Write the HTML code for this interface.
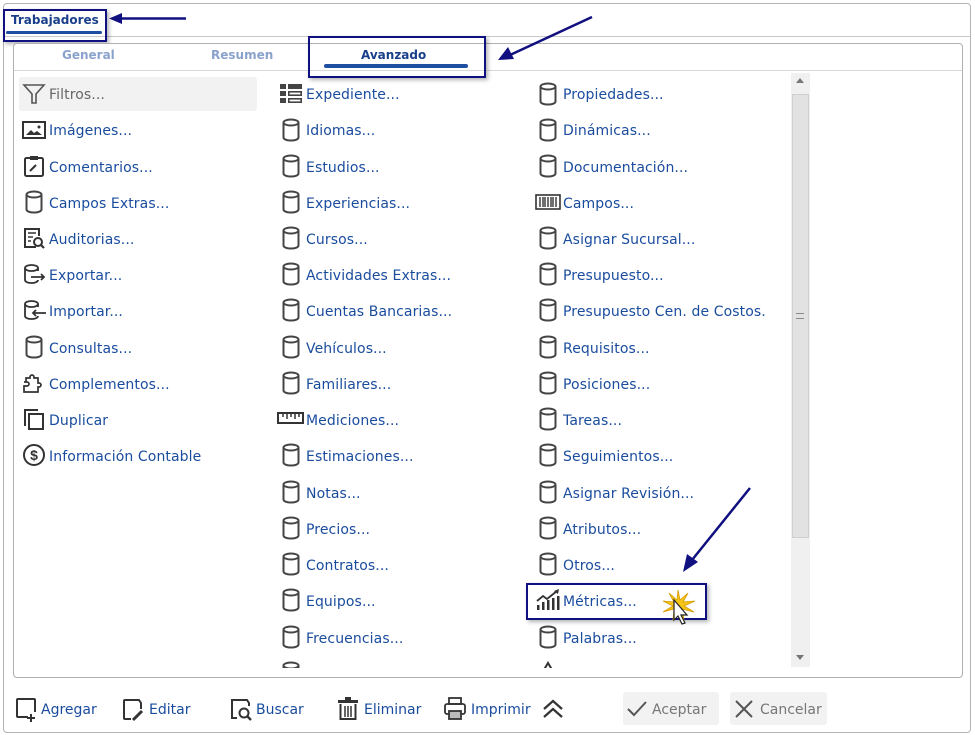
<!DOCTYPE html>
<html><head><meta charset="utf-8"><style>
*{margin:0;padding:0;box-sizing:border-box}
body{width:975px;height:735px;background:#fff;font-family:"DejaVu Sans","Liberation Sans",sans-serif;position:relative;overflow:hidden}
.abs{position:absolute}
.frame{left:3px;top:3px;width:968px;height:730px;border:1px solid #b4b4b4;border-radius:4px;background:#fff}
.panel{left:13px;top:43px;width:950px;height:635px;border:1px solid #b0b0b0;border-radius:4px;background:#fff}
.it{position:absolute;font-size:14px;color:#1a4c9e;white-space:nowrap;line-height:18px;margin-top:1px;letter-spacing:0.1px}
.ic{position:absolute;width:24px;height:24px}
.tab{position:absolute;font-size:12px;font-weight:bold;top:48px}
.tb{position:absolute;top:701px;font-size:14px;color:#1a4c9e;line-height:18px}
svg{overflow:visible}
</style></head><body>
<svg width="0" height="0" style="position:absolute"><defs>
<symbol id="cyl" viewBox="0 0 24 24"><g fill="none" stroke="#444" stroke-width="2"><ellipse cx="12" cy="4.5" rx="7.5" ry="3"/><path d="M4.5 4.5v15c0 1.7 3.4 3 7.5 3s7.5-1.3 7.5-3v-15"/></g></symbol>
</defs></svg>
<div class="abs frame"></div>
<div class="abs" style="left:4px;top:36px;width:966px;height:1px;background:#c8c8c8"></div>
<div class="abs" style="left:11px;top:13px;font-size:12px;font-weight:bold;color:#1a3f8a">Trabajadores</div>
<div class="abs" style="left:6px;top:31px;width:96px;height:3px;background:#1f4fa0;border-radius:2px"></div>
<div class="abs" style="left:3px;top:9px;width:104px;height:33px;border:2px solid #101080;box-shadow:2px 2px 4px rgba(0,0,0,.3)"></div>
<svg class="abs" style="left:108px;top:12px" width="80" height="14"><path d="M78 6.5H12" stroke="#101080" stroke-width="2.5"/><path d="M1 6.5L14 1v11z" fill="#101080"/></svg>
<div class="abs panel"></div>
<div class="abs" style="left:14px;top:70px;width:948px;height:1px;background:#d8d8d8"></div>
<div class="tab" style="left:62px;color:#8aa2cc">General</div>
<div class="tab" style="left:211px;color:#8aa2cc">Resumen</div>
<div class="tab" style="left:361px;color:#1a3f8a">Avanzado</div>
<div class="abs" style="left:324px;top:64px;width:144px;height:4px;background:#1f4fa0;border-radius:2px"></div>
<div class="abs" style="left:308px;top:36px;width:178px;height:42px;border:2px solid #101080;box-shadow:2px 2px 4px rgba(0,0,0,.3)"></div>
<svg class="abs" style="left:496px;top:15px" width="100" height="48"><path d="M96 2L14 40" stroke="#101080" stroke-width="2.5"/><path d="M2 45L12 32l6 12z" fill="#101080"/></svg>
<div class="abs" style="left:791px;top:73px;width:19px;height:594px;background:#f0f0f0"></div>
<div class="abs" style="left:792px;top:94px;width:17px;height:444px;background:#e2e2e2;border:1px solid #cfcfcf"></div>
<div class="abs" style="left:796px;top:313px;width:8px;height:6px;border-top:1px solid #888;border-bottom:1px solid #888"></div>
<div class="abs" style="left:796px;top:78px;border:4px solid transparent;border-bottom:5px solid #777;border-top:0"></div>
<div class="abs" style="left:796px;top:655px;border:4px solid transparent;border-top:5px solid #777;border-bottom:0"></div>
<div class="abs" style="left:19px;top:77px;width:238px;height:34px;background:#f2f2f2;border-radius:3px"></div>
<div style="position:absolute;left:0;top:0;width:790px;height:668px;overflow:hidden">
<svg class="ic" style="left:22px;top:82px" viewBox="0 0 24 24"><path d="M2 3h20l-8 9v9h-4v-9z" fill="none" stroke="#555" stroke-width="1.6"/></svg><div class="it" style="left:49px;top:85px;color:#666">Filtros...</div>
<svg class="ic" style="left:22px;top:118px" viewBox="0 0 24 24"><rect x="1" y="4" width="22" height="16" fill="none" stroke="#333" stroke-width="2"/><path d="M4 17l5-5 3 3 3-2 5 4z" fill="#333"/><circle cx="17" cy="9" r="1.5" fill="#333"/></svg><div class="it" style="left:49px;top:121px">Imágenes...</div>
<svg class="ic" style="left:22px;top:154px" viewBox="0 0 24 24"><rect x="3" y="4" width="18" height="18" rx="1.5" fill="none" stroke="#333" stroke-width="2"/><rect x="8" y="2" width="8" height="4" fill="#333"/><path d="M8 17l6-6" stroke="#333" stroke-width="2"/></svg><div class="it" style="left:49px;top:158px">Comentarios...</div>
<svg class="ic" style="left:22px;top:190px"><use href="#cyl"/></svg><div class="it" style="left:49px;top:194px">Campos Extras...</div>
<svg class="ic" style="left:22px;top:226px" viewBox="0 0 24 24"><path d="M14 21H3V3h14v7" fill="none" stroke="#333" stroke-width="2"/><path d="M6 7h8M6 11h5M6 15h3" stroke="#333" stroke-width="1.6"/><circle cx="16" cy="16" r="4" fill="none" stroke="#333" stroke-width="2"/><path d="M19 19l3 3" stroke="#333" stroke-width="2.2"/></svg><div class="it" style="left:49px;top:230px">Auditorias...</div>
<svg class="ic" style="left:22px;top:262px" viewBox="0 0 24 24"><path d="M16 9V6c0-1.7-3-3-6.5-3S3 4.3 3 6v12c0 1.7 3 3 6.5 3s6.5-1.3 6.5-3" fill="none" stroke="#333" stroke-width="1.8"/><path d="M3 6c0 1.7 3 3 6.5 3s6.5-1.3 6.5-3" fill="none" stroke="#333" stroke-width="1.8"/><path d="M9 15h13M19 12l3 3-3 3" fill="none" stroke="#333" stroke-width="1.8"/></svg><div class="it" style="left:49px;top:266px">Exportar...</div>
<svg class="ic" style="left:22px;top:298px" viewBox="0 0 24 24"><path d="M16 9V6c0-1.7-3-3-6.5-3S3 4.3 3 6v12c0 1.7 3 3 6.5 3s6.5-1.3 6.5-3" fill="none" stroke="#333" stroke-width="1.8"/><path d="M3 6c0 1.7 3 3 6.5 3s6.5-1.3 6.5-3" fill="none" stroke="#333" stroke-width="1.8"/><path d="M24 15H11M14 12l-3 3 3 3" fill="none" stroke="#333" stroke-width="1.8"/></svg><div class="it" style="left:49px;top:302px">Importar...</div>
<svg class="ic" style="left:22px;top:335px"><use href="#cyl"/></svg><div class="it" style="left:49px;top:339px">Consultas...</div>
<svg class="ic" style="left:22px;top:371px" viewBox="0 0 24 24"><path d="M2 11h3a2 2 0 110 4H2v6h14v-5h1a2 2 0 100-4h-1V7h-4V6a2 2 0 10-4 0v1H4v4" fill="none" stroke="#333" stroke-width="1.7"/></svg><div class="it" style="left:49px;top:375px">Complementos...</div>
<svg class="ic" style="left:22px;top:407px" viewBox="0 0 24 24"><path d="M3 19V3h13" fill="none" stroke="#333" stroke-width="2"/><rect x="7" y="7" width="14" height="15" fill="none" stroke="#333" stroke-width="2"/></svg><div class="it" style="left:49px;top:411px">Duplicar</div>
<svg class="ic" style="left:22px;top:443px" viewBox="0 0 24 24"><circle cx="12" cy="12" r="10" fill="none" stroke="#333" stroke-width="2"/><text x="12" y="17" font-size="14" font-weight="bold" text-anchor="middle" fill="#333" font-family="Liberation Sans">$</text></svg><div class="it" style="left:49px;top:447px">Información Contable</div>
<svg class="ic" style="left:279px;top:82px" viewBox="0 0 24 24"><g fill="#444"><rect x="1" y="2" width="6" height="5"/><rect x="9" y="2" width="14" height="5"/><rect x="1" y="9" width="6" height="5"/><rect x="1" y="16" width="6" height="5"/></g><g fill="none" stroke="#444" stroke-width="1.6"><rect x="9.8" y="9.8" width="12.4" height="3.4"/><rect x="9.8" y="16.8" width="12.4" height="3.4"/></g></svg><div class="it" style="left:306px;top:85px">Expediente...</div>
<svg class="ic" style="left:279px;top:118px"><use href="#cyl"/></svg><div class="it" style="left:306px;top:121px">Idiomas...</div>
<svg class="ic" style="left:279px;top:154px"><use href="#cyl"/></svg><div class="it" style="left:306px;top:158px">Estudios...</div>
<svg class="ic" style="left:279px;top:190px"><use href="#cyl"/></svg><div class="it" style="left:306px;top:194px">Experiencias...</div>
<svg class="ic" style="left:279px;top:226px"><use href="#cyl"/></svg><div class="it" style="left:306px;top:230px">Cursos...</div>
<svg class="ic" style="left:279px;top:262px"><use href="#cyl"/></svg><div class="it" style="left:306px;top:266px">Actividades Extras...</div>
<svg class="ic" style="left:279px;top:298px"><use href="#cyl"/></svg><div class="it" style="left:306px;top:302px">Cuentas Bancarias...</div>
<svg class="ic" style="left:279px;top:335px"><use href="#cyl"/></svg><div class="it" style="left:306px;top:339px">Vehículos...</div>
<svg class="ic" style="left:279px;top:371px"><use href="#cyl"/></svg><div class="it" style="left:306px;top:375px">Familiares...</div>
<svg class="abs" style="left:277px;top:411px" width="27" height="14" viewBox="0 0 27 14"><rect x="1" y="2" width="25" height="10" fill="none" stroke="#333" stroke-width="2"/><path d="M6 2v4M10 2v6M14 2v4M18 2v6M22 2v4" stroke="#333" stroke-width="1.5"/></svg><div class="it" style="left:306px;top:411px">Mediciones...</div>
<svg class="ic" style="left:279px;top:443px"><use href="#cyl"/></svg><div class="it" style="left:306px;top:447px">Estimaciones...</div>
<svg class="ic" style="left:279px;top:480px"><use href="#cyl"/></svg><div class="it" style="left:306px;top:484px">Notas...</div>
<svg class="ic" style="left:279px;top:516px"><use href="#cyl"/></svg><div class="it" style="left:306px;top:520px">Precios...</div>
<svg class="ic" style="left:279px;top:552px"><use href="#cyl"/></svg><div class="it" style="left:306px;top:556px">Contratos...</div>
<svg class="ic" style="left:279px;top:588px"><use href="#cyl"/></svg><div class="it" style="left:306px;top:592px">Equipos...</div>
<svg class="ic" style="left:279px;top:625px"><use href="#cyl"/></svg><div class="it" style="left:306px;top:629px">Frecuencias...</div>
<svg class="ic" style="left:279px;top:661px"><use href="#cyl"/></svg><div class="it" style="left:306px;top:665px">Otros...</div>
<svg class="ic" style="left:536px;top:82px"><use href="#cyl"/></svg><div class="it" style="left:563px;top:85px">Propiedades...</div>
<svg class="ic" style="left:536px;top:118px"><use href="#cyl"/></svg><div class="it" style="left:563px;top:121px">Dinámicas...</div>
<svg class="ic" style="left:536px;top:154px"><use href="#cyl"/></svg><div class="it" style="left:563px;top:158px">Documentación...</div>
<svg class="abs" style="left:535px;top:194px" width="26" height="16" viewBox="0 0 26 16"><rect x="1" y="1" width="24" height="14" fill="none" stroke="#333" stroke-width="1.6"/><path d="M5 3v10M8 3v10M10 3v10M13 3v10M16 3v10M18 3v10M21 3v10" stroke="#333" stroke-width="1.4"/></svg><div class="it" style="left:563px;top:194px">Campos...</div>
<svg class="ic" style="left:536px;top:226px"><use href="#cyl"/></svg><div class="it" style="left:563px;top:230px">Asignar Sucursal...</div>
<svg class="ic" style="left:536px;top:262px"><use href="#cyl"/></svg><div class="it" style="left:563px;top:266px">Presupuesto...</div>
<svg class="ic" style="left:536px;top:298px"><use href="#cyl"/></svg><div class="it" style="left:563px;top:302px">Presupuesto Cen. de Costos.</div>
<svg class="ic" style="left:536px;top:335px"><use href="#cyl"/></svg><div class="it" style="left:563px;top:339px">Requisitos...</div>
<svg class="ic" style="left:536px;top:371px"><use href="#cyl"/></svg><div class="it" style="left:563px;top:375px">Posiciones...</div>
<svg class="ic" style="left:536px;top:407px"><use href="#cyl"/></svg><div class="it" style="left:563px;top:411px">Tareas...</div>
<svg class="ic" style="left:536px;top:443px"><use href="#cyl"/></svg><div class="it" style="left:563px;top:447px">Seguimientos...</div>
<svg class="ic" style="left:536px;top:480px"><use href="#cyl"/></svg><div class="it" style="left:563px;top:484px">Asignar Revisión...</div>
<svg class="ic" style="left:536px;top:516px"><use href="#cyl"/></svg><div class="it" style="left:563px;top:520px">Atributos...</div>
<svg class="ic" style="left:536px;top:552px"><use href="#cyl"/></svg><div class="it" style="left:563px;top:556px">Otros...</div>
<svg class="ic" style="left:536px;top:588px" viewBox="0 0 24 24"><g fill="#333"><rect x="1" y="17" width="2.5" height="5"/><rect x="6" y="14" width="2.5" height="8"/><rect x="11" y="12" width="2.5" height="10"/><rect x="16" y="10" width="2.5" height="12"/><rect x="21" y="8" width="2.5" height="14"/></g><path d="M1 13l6-5 4 3 10-8" fill="none" stroke="#333" stroke-width="1.8"/><path d="M23 1l-1 5-4-3z" fill="#333"/></svg><div class="it" style="left:563px;top:592px">Métricas...</div>
<svg class="ic" style="left:536px;top:625px"><use href="#cyl"/></svg><div class="it" style="left:563px;top:629px">Palabras...</div>
<svg class="ic" style="left:536px;top:661px" viewBox="0 0 24 24"><path d="M6 12l6-10 6 10" fill="none" stroke="#333" stroke-width="2"/></svg>
</div>
<div class="abs" style="left:526px;top:583px;width:181px;height:37px;border:2px solid #101080;box-shadow:2px 2px 4px rgba(0,0,0,.3)"></div>
<svg class="abs" style="left:660px;top:588px" width="40" height="44" viewBox="0 0 40 44"><path d="M18 2l2 10 8-7-5 9 12-1-11 5 10 6-12-3 2 11-6-9-5 9 1-11-11 3 10-6-10-5 11 1-5-9 8 7z" fill="#f5c518" stroke="#d59b00" stroke-width=".8"/><path d="M14 12v20l4-4 4 8 3-1-4-8h6z" fill="#fff" stroke="#222" stroke-width="1.2"/></svg>
<svg class="abs" style="left:680px;top:486px" width="72" height="90"><path d="M70 2L12 74" stroke="#101080" stroke-width="2.5"/><path d="M3 86l4-18 11 8z" fill="#101080"/></svg>
<svg class="abs" style="left:15px;top:697px" width="24" height="26" viewBox="0 0 24 26"><path d="M13 20H3a1 1 0 01-1-1V3a1 1 0 011-1h16a1 1 0 011 1v12" fill="none" stroke="#333" stroke-width="2"/><path d="M16 17v8M12 21h8" stroke="#333" stroke-width="2"/></svg><div class="tb" style="left:41px">Agregar</div>
<svg class="abs" style="left:121px;top:697px" width="24" height="26" viewBox="0 0 24 26"><path d="M10 22H4a1 1 0 01-1-1V4a1 1 0 011-1h14l2 3v6" fill="none" stroke="#333" stroke-width="2"/><path d="M12 23l9-9" stroke="#333" stroke-width="3"/></svg><div class="tb" style="left:149px">Editar</div>
<svg class="abs" style="left:229px;top:697px" width="26" height="26" viewBox="0 0 26 26"><path d="M8 21H3V3h15l2 3v3" fill="none" stroke="#333" stroke-width="2"/><circle cx="15" cy="16" r="4.5" fill="none" stroke="#333" stroke-width="2"/><path d="M18 19l4 4" stroke="#333" stroke-width="2.4"/></svg><div class="tb" style="left:256px">Buscar</div>
<svg class="abs" style="left:337px;top:697px" width="22" height="24" viewBox="0 0 22 24"><rect x="1" y="3" width="20" height="3" fill="#333"/><rect x="8" y="0" width="6" height="3" fill="#333"/><path d="M3.5 7v15h15V7" fill="none" stroke="#333" stroke-width="2"/><path d="M8 9v11M11 9v11M14 9v11" stroke="#333" stroke-width="1.5"/></svg><div class="tb" style="left:364px">Eliminar</div>
<svg class="abs" style="left:444px;top:697px" width="22" height="24" viewBox="0 0 22 24"><rect x="5" y="1" width="12" height="6" fill="none" stroke="#333" stroke-width="1.8"/><rect x="1" y="7" width="20" height="10" rx="2" fill="none" stroke="#333" stroke-width="1.8"/><rect x="5" y="14" width="12" height="8" fill="#bbb" stroke="#333" stroke-width="1.8"/></svg><div class="tb" style="left:471px">Imprimir</div>
<svg class="abs" style="left:541px;top:698px" width="24" height="22" viewBox="0 0 24 22"><path d="M3 11l9-8 9 8M3 19l9-8 9 8" fill="none" stroke="#333" stroke-width="2.2"/></svg>
<div class="abs" style="left:623px;top:692px;width:96px;height:33px;background:#f2f2f2;border-radius:3px"></div>
<svg class="abs" style="left:626px;top:699px" width="22" height="20" viewBox="0 0 22 20"><path d="M2 10l6 6L20 3" fill="none" stroke="#555" stroke-width="2"/></svg><div class="tb" style="left:652px;color:#777">Aceptar</div>
<div class="abs" style="left:730px;top:692px;width:97px;height:33px;background:#f2f2f2;border-radius:3px"></div>
<svg class="abs" style="left:734px;top:699px" width="20" height="20" viewBox="0 0 20 20"><path d="M2 2l16 16M18 2L2 18" stroke="#555" stroke-width="2"/></svg><div class="tb" style="left:760px;color:#777">Cancelar</div>
</body></html>
